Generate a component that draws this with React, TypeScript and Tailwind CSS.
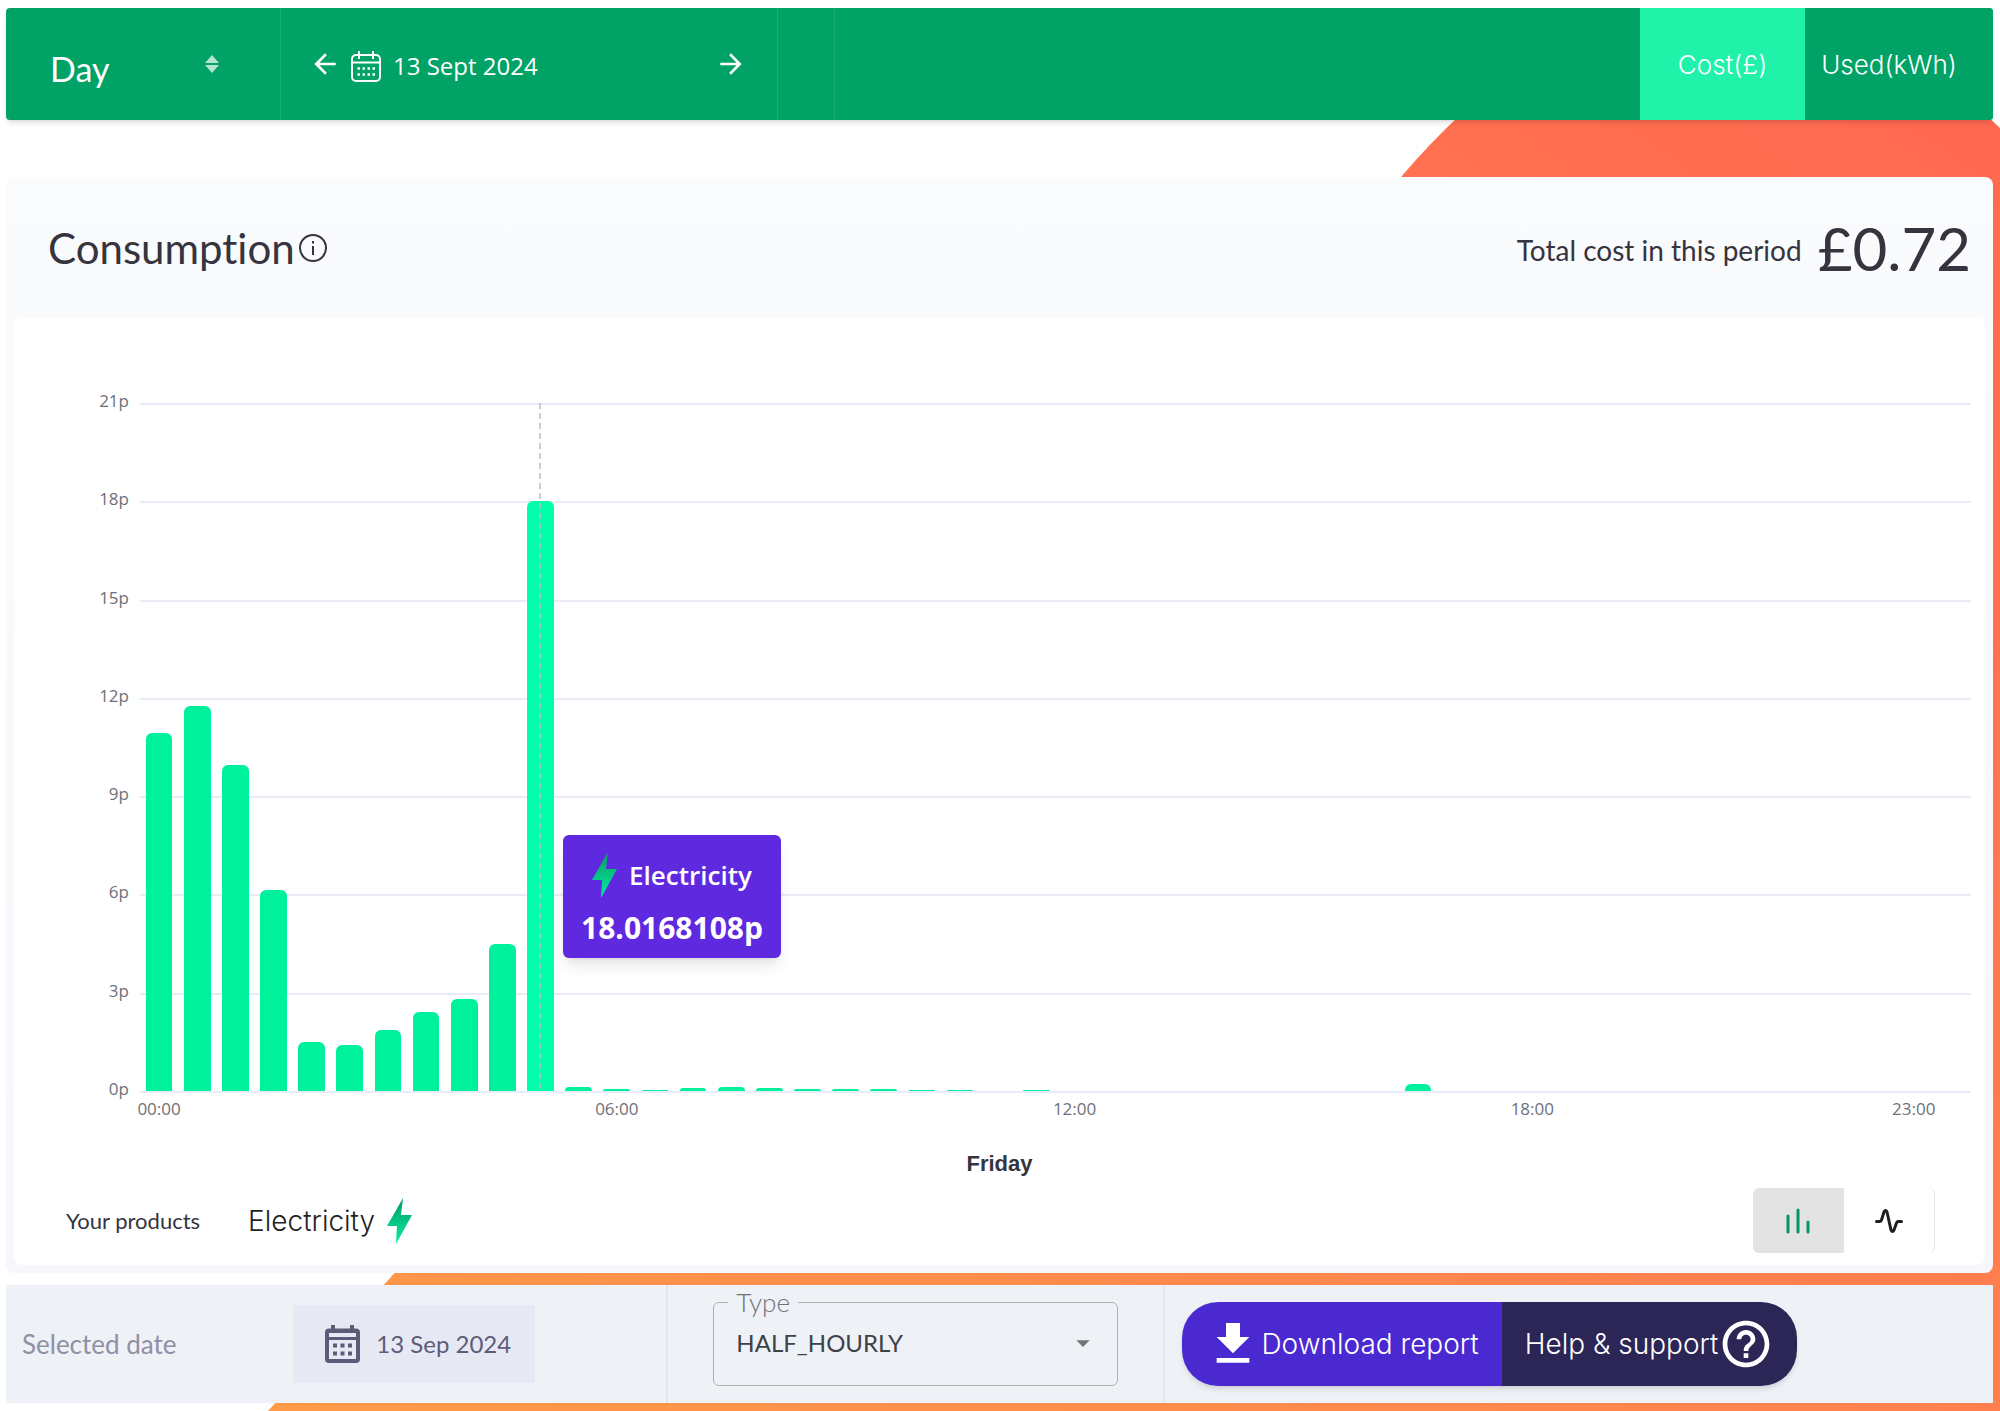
import React, { useState } from "react";
import {
  MdArrowBack,
  MdArrowDropDown,
  MdArrowForward,
  MdGetApp,
  MdHelpOutline,
} from "react-icons/md";

const MAX_PENCE = 21;
const TICKS = [21, 18, 15, 12, 9, 6, 3, 0];
const SLOTS = 48;
const ACTIVE_SLOT = 10;

// pence per half hour, 0 where there is no reading
const READINGS = [
  10.93, 11.75, 9.95, 6.14, 1.5, 1.4, 1.86, 2.41, 2.82, 4.49, 18.0168108, 0.12,
  0.07, 0.03, 0.09, 0.12, 0.1, 0.05, 0.06, 0.05, 0.02, 0.02, 0, 0.02, 0, 0, 0, 0,
  0, 0, 0, 0, 0, 0.2, 0, 0, 0, 0, 0, 0, 0, 0, 0, 0, 0, 0, 0, 0,
];

const HOUR_LABELS: Record<number, string> = {
  0: "00:00",
  12: "06:00",
  24: "12:00",
  36: "18:00",
  46: "23:00",
};

const Bolt = ({ id }: { id: string }) => (
  <svg viewBox="0 0 25 46" className="h-[46px] w-[25px]" aria-hidden="true">
    <defs>
      <linearGradient id={id} x1="0" y1="0" x2="0" y2="1">
        <stop offset="0" stopColor="#049a62" />
        <stop offset="1" stopColor="#05efa0" />
      </linearGradient>
    </defs>
    <path d="M16 0 L0 28 H10 L9 46 L25 17 H14 Z" fill={`url(#${id})`} />
  </svg>
);

const CalendarOutline = () => (
  <svg viewBox="0 0 30 31" className="h-[31px] w-[30px]" fill="none" stroke="currentColor" strokeWidth="2" aria-hidden="true">
    <rect x="1" y="4" width="28" height="26" rx="4" />
    <path d="M1 11.5H29M8 0V8M22 0V8" />
    <path d="M6.5 17.5H24M6.5 23.5H24" strokeWidth="2.5" strokeDasharray="2.5 2.5" />
  </svg>
);

const CalendarSolid = () => (
  <svg viewBox="0 0 35 38" className="h-[38px] w-[35px]" fill="none" stroke="currentColor" aria-hidden="true">
    <rect x="2" y="5.5" width="31" height="30.5" rx="2" strokeWidth="4" />
    <path d="M2 6H33" strokeWidth="4" />
    <path d="M2 13.5H33" strokeWidth="3" />
    <path d="M8 0V5M27 0V5" strokeWidth="4" />
    <path d="M8 20.5H27M8 28.5H27" strokeWidth="4" strokeDasharray="4 3.5" />
  </svg>
);

const InfoIcon = () => (
  <svg viewBox="0 0 28 28" className="h-7 w-7" fill="none" stroke="currentColor" strokeWidth="2" aria-hidden="true">
    <circle cx="14" cy="14" r="13" />
    <path d="M14 12V21M14 7V9.5" />
  </svg>
);

const Backdrop = () => (
  <svg
    viewBox="0 0 2000 1411"
    preserveAspectRatio="none"
    className="absolute inset-0 h-full w-full"
    aria-hidden="true"
  >
    <defs>
      <linearGradient id="backdrop" x1="0" y1="1" x2="1" y2="0">
        <stop offset="0" stopColor="#ff9a48" />
        <stop offset="0.6" stopColor="#ff7b50" />
        <stop offset="1" stopColor="#ff6850" />
      </linearGradient>
    </defs>
    <path d="M268 1411 L1401 177 Q1430 143 1457 118 L1480 100 H1970 L2000 128 V1411 Z" fill="url(#backdrop)" />
  </svg>
);

const TopBar = () => {
  const [unit, setUnit] = useState("cost");
  return (
    <header className="flex h-28 overflow-hidden rounded-sm bg-[#00a266] text-white shadow-md">
      <div className="relative flex w-[275px] items-center border-r border-white/10">
        <select
          aria-label="Period"
          defaultValue="Day"
          className="w-full appearance-none bg-transparent pt-2.5 pl-11 font-[Lato] text-[34px] leading-10"
        >
          <option>Day</option>
        </select>
        <svg viewBox="0 0 14 18" className="pointer-events-none absolute right-[61px] h-[18px] w-[14px] fill-white/70" aria-hidden="true">
          <path d="M7 0 L14 8 H0 Z M7 18 L0 10 H14 Z" />
        </svg>
      </div>
      <div className="flex w-1/4 items-center border-r border-white/10 pr-[30px] pl-7">
        <button type="button" aria-label="Previous day">
          <MdArrowBack className="size-8" />
        </button>
        <button type="button" className="flex items-center gap-3 pt-1 pl-[10px] font-['Open_Sans'] text-2xl">
          <CalendarOutline />
          13 Sept 2024
        </button>
        <button type="button" aria-label="Next day" className="ml-auto">
          <MdArrowForward className="size-8" />
        </button>
      </div>
      <div className="w-[57px] border-r border-white/10" />
      <div className="ml-auto flex font-[Inter] text-[26px] font-light">
        <button
          type="button"
          aria-pressed={unit === "cost"}
          onClick={() => setUnit("cost")}
          className="w-[165px] bg-[#00a266] aria-pressed:bg-[#20f2aa]"
        >
          Cost(£)
        </button>
        <button
          type="button"
          aria-pressed={unit === "used"}
          onClick={() => setUnit("used")}
          className="w-[188px] bg-[#00a266] pr-5 aria-pressed:bg-[#20f2aa]"
        >
          Used(kWh)
        </button>
      </div>
    </header>
  );
};

const Tooltip = () => (
  <div className="absolute top-[432px] left-[423px] flex h-[123px] w-[218px] flex-col items-center justify-center gap-3 rounded-md bg-[#5f29e0] pt-1 font-['Open_Sans'] text-white shadow-lg">
    <div className="flex items-center gap-3 text-[26px] leading-[46px] font-semibold">
      <Bolt id="bolt-tooltip" />
      Electricity
    </div>
    <div className="text-[30px] leading-9 font-bold">18.0168108p</div>
  </div>
);

const Chart = () => (
  <div className="pr-[14px] pl-[126px]">
    <div className="relative h-[688px]">
      {TICKS.map((tick) => (
        <div
          key={tick}
          className="absolute right-0 left-0 border-t-2 border-[#e8edf5]"
          style={{ top: `${(1 - tick / MAX_PENCE) * 100}%` }}
        >
          <span className="absolute -top-4 right-full pr-[11px] font-['Open_Sans'] text-[17px] leading-6 text-[#6e7079]">
            {tick}p
          </span>
        </div>
      ))}
      <div className="absolute inset-0 grid items-end" style={{ gridTemplateColumns: `repeat(${SLOTS}, minmax(0, 1fr))` }}>
        {READINGS.map((pence, slot) => (
          <div key={slot} className="relative flex h-full items-end justify-center">
            <div
              className={
                slot === ACTIVE_SLOT
                  ? "w-[70%] rounded-t-md bg-[#00ffaa]"
                  : "w-[70%] rounded-t-md bg-[#00f19b]"
              }
              style={{ height: `${(pence / MAX_PENCE) * 100}%` }}
            />
            {slot === ACTIVE_SLOT && (
              <svg className="absolute inset-0 h-full w-full" aria-hidden="true">
                <line x1="50%" y1="0" x2="50%" y2="100%" stroke="#b9bac6" strokeOpacity="0.75" strokeWidth="2" strokeDasharray="6 4" />
              </svg>
            )}
          </div>
        ))}
      </div>
      <Tooltip />
    </div>
    <div className="grid pt-[6px] font-['Open_Sans'] text-[17px] leading-6 text-[#6e7079]" style={{ gridTemplateColumns: `repeat(${SLOTS}, minmax(0, 1fr))` }}>
      {READINGS.map((_, slot) => (
        <span key={slot} className="flex justify-center whitespace-nowrap">
          {HOUR_LABELS[slot]}
        </span>
      ))}
    </div>
  </div>
);

const ChartTypeToggle = () => {
  const [view, setView] = useState("bars");
  return (
    <div className="flex h-[65px] w-[182px] overflow-hidden rounded-md border-r border-[#e3e3e3]">
      <button
        type="button"
        aria-label="Bar chart"
        aria-pressed={view === "bars"}
        onClick={() => setView("bars")}
        className="flex w-1/2 items-center justify-center text-[#1f1f1f] aria-pressed:bg-[#e3e3e3] aria-pressed:text-[#05965f]"
      >
        <svg viewBox="0 0 24 26" className="h-[26px] w-6" fill="none" stroke="currentColor" strokeWidth="3" strokeLinecap="round" aria-hidden="true">
          <path d="M2 8V24M12 2V24M22 14V24" />
        </svg>
      </button>
      <button
        type="button"
        aria-label="Line chart"
        aria-pressed={view === "line"}
        onClick={() => setView("line")}
        className="flex w-1/2 items-center justify-center text-[#1f1f1f] aria-pressed:bg-[#e3e3e3] aria-pressed:text-[#05965f]"
      >
        <svg viewBox="0 0 28 24" className="h-6 w-7" fill="none" stroke="currentColor" strokeWidth="3" strokeLinejoin="round" strokeLinecap="round" aria-hidden="true">
          <path d="M1.5 12.5H4.5Q6 12.5 6.5 11L9 3Q10.5 0 12 3L16 21Q17.5 24 19 21L21.5 14Q22 12.5 23.5 12.5H26.5" />
        </svg>
      </button>
    </div>
  );
};

const ConsumptionCard = () => (
  <section className="mt-[57px] rounded-lg bg-gradient-to-b from-[#fafbfc] to-[#f5f7fb] px-2 pb-2">
    <div className="flex h-[141px] items-center justify-between pr-[14px] pl-[34px] font-[Lato] text-[#35343f]">
      <div className="flex items-center gap-1">
        <h1 className="text-[42px] leading-none [font-variant-ligatures:none]">Consumption</h1>
        <button type="button" aria-label="About consumption">
          <InfoIcon />
        </button>
      </div>
      <div className="flex items-center gap-4">
        <span className="pt-1 text-[28px] [font-variant-ligatures:none]">Total cost in this period</span>
        <span className="text-[60px] leading-none">£0.72</span>
      </div>
    </div>
    <div className="rounded-lg bg-white pt-[85px] pb-3">
      <Chart />
      <p className="pt-[27px] text-center font-['Liberation_Sans'] text-[22px] leading-8 font-bold text-[#35343f]">
        Friday
      </p>
      <div className="flex items-center justify-between pt-2 pr-[50px] pl-[52px]">
        <div className="flex items-center">
          <span className="font-[Lato] text-[22px] text-[#35343f]">Your products</span>
          <span className="flex items-center gap-3 pl-12 font-[Inter] text-[28px] font-light text-[#1f1f1f]">
            Electricity
            <Bolt id="bolt-legend" />
          </span>
        </div>
        <ChartTypeToggle />
      </div>
    </div>
  </section>
);

const BottomBar = () => (
  <footer className="mt-3 flex h-[118px] bg-[#eef1f6]">
    <div className="flex w-1/3 items-center justify-between border-r-2 border-[#e1e4f5] pr-[131px] pl-4 font-[Lato] text-2xl">
      <label htmlFor="selected-date" className="text-[26px] text-[#918fa5]">
        Selected date
      </label>
      <button
        id="selected-date"
        type="button"
        className="flex h-[78px] w-[242px] items-center gap-4 bg-[#e6e9f3] pl-8 text-[#5d5b78]"
      >
        <CalendarSolid />
        13 Sep 2024
      </button>
    </div>
    <div className="flex w-1/4 items-center border-r-2 border-[#e1e4f5] pr-[45px] pb-[14px] pl-[45px] font-[Lato]">
      <fieldset className="relative h-[98px] w-full rounded-md border border-[#aeb0b4] pl-[22px]">
        <legend className="-ml-2 px-2 text-[26px] leading-7 font-light text-[#6f7175]">
          <label htmlFor="type">Type</label>
        </legend>
        <select
          id="type"
          defaultValue="HALF_HOURLY"
          className="h-[54px] w-full appearance-none bg-transparent text-2xl text-[#404146]"
        >
          <option>HALF_HOURLY</option>
        </select>
        <MdArrowDropDown className="pointer-events-none absolute right-[18px] bottom-[26px] size-8 text-[#757575]" />
      </fieldset>
    </div>
    <div className="flex items-center pl-[17px] font-[Inter] text-[28px] font-light text-white">
      <div className="flex h-[84px] overflow-hidden rounded-[36px] shadow-md">
        <button type="button" className="flex w-[320px] items-center justify-center bg-[#4a29d1]">
          <MdGetApp className="size-14" />
          Download report
        </button>
        <button type="button" className="flex w-[295px] items-center justify-center bg-[#2b2655]">
          Help &amp; support
          <MdHelpOutline className="size-14" />
        </button>
      </div>
    </div>
  </footer>
);

export default function App() {
  return (
    <div className="relative min-h-screen overflow-hidden bg-white">
      <Backdrop />
      <main className="relative py-2 pr-[7px] pl-[6px]">
        <TopBar />
        <ConsumptionCard />
        <BottomBar />
      </main>
    </div>
  );
}
